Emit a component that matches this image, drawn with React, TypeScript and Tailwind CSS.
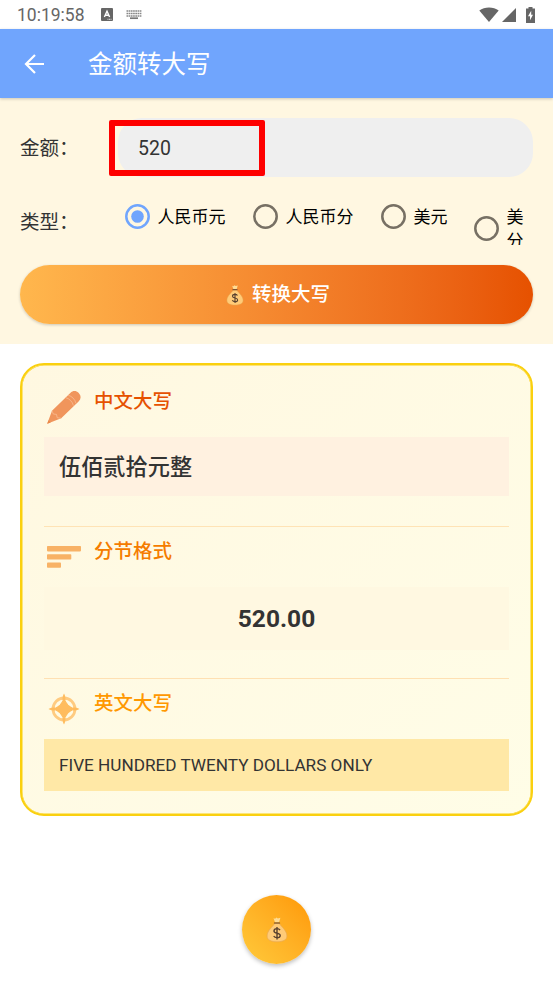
import { ReactNode, useState } from "react";

const types = [
  { label: "人民币元", className: "w-32" },
  { label: "人民币分", className: "w-32" },
  { label: "美元", className: "w-[93px]" },
  { label: "美分", className: "w-[52px]" },
];

function MoneyBag({ className }: { className: string }) {
  return (
    <svg viewBox="0 0 24 28" className={className}>
      <path d="M8.2 1.6 10 2.3 11.3.9 13 2 15.7 1.2 14.3 6H9.8z" fill="#ffdc94" />
      <path
        d="M9.4 7.5h5.2c1.3 3 8.2 7.2 8.2 13.6 0 4.5-4.7 6.3-10.8 6.3S1.2 25.6 1.2 21.1c0-6.4 6.9-10.6 8.2-13.6z"
        fill="#ffcb78"
        stroke="#e8a750"
        strokeWidth=".7"
      />
      <path d="M9.2 6.900h5.600" stroke="#64432f" strokeWidth="1.3" strokeLinecap="round" />
      <path
        d="M15.300 14.700c-.7-1.100-1.800-1.600-3.300-1.600-2 0-3.300.9-3.300 2.400 0 3.500 6.800 1.500 6.800 5 0 1.500-1.500 2.400-3.500 2.400-1.600 0-2.900-.6-3.600-1.800M12 11.200v13.600"
        fill="none"
        stroke="#58402e"
        strokeWidth="1.5"
      />
    </svg>
  );
}

function PencilIcon() {
  return (
    <svg viewBox="0 0 36 36" className="size-9">
      <path
        d="M1.200 34.800 6 21.800 24.300 4c2.600-2.600 5.800-2.500 8.200-.2l.4.400c2.400 2.500 2.300 5.600-.3 8.200L15.200 29.300z"
        fill="#f0955c"
      />
      <path
        d="M6 21.800l1.300 3.200 3.200.4.700 3.300 4 .6M19.700 8.700c3.600.8 6.800 3.900 7.700 7.900M22.200 6.300c3.600.8 6.800 3.900 7.700 7.900"
        fill="none"
        stroke="#f9bd93"
        strokeWidth=".8"
      />
      <path d="M1.200 34.800l1.300-3.500 2.200 2.200z" fill="#e98848" />
    </svg>
  );
}

function BarsIcon() {
  return (
    <svg viewBox="0 0 36 36" className="size-9" fill="#f8b266">
      <rect x="1" y="7" width="34" height="5.400" rx=".8" />
      <rect x="1" y="15.200" width="24.300" height="5.400" rx=".8" />
      <rect x="1" y="23.400" width="14" height="5.400" rx=".8" />
    </svg>
  );
}

function CompassIcon() {
  return (
    <svg viewBox="0 0 36 36" className="size-9" fill="#ffbc5e">
      <circle cx="18" cy="18" r="11" fill="none" stroke="#ffcb80" strokeWidth="2.800" />
      <path d="M18 2.500c1.200 2 1.500 4 1.500 6.500h-3c0-2.500.3-4.500 1.500-6.500zM18 33.500c-1.200-2-1.500-4-1.500-6.500h3c0 2.500-.3 4.500-1.500 6.500zM2.500 18c2-1.200 4-1.500 6.500-1.500v3c-2.500 0-4.500-.3-6.500-1.500zM33.500 18c-2 1.200-4 1.500-6.500 1.500v-3c2.500 0 4.500.3 6.500 1.500z" />
      <path d="M18 8c1.300 2.700 2.300 4.300 3.800 6.200C23.700 15.700 25.300 16.700 28 18c-2.700 1.300-4.300 2.300-6.200 3.800C20.300 23.700 19.300 25.300 18 28c-1.300-2.700-2.300-4.300-3.800-6.200C12.300 20.300 10.700 19.300 8 18c2.700-1.300 4.300-2.300 6.200-3.800C15.700 12.300 16.700 10.700 18 8z" stroke="#ffbc5e" strokeWidth="1.200" />
    </svg>
  );
}

function SectionTitle({ icon, color, children }: { icon: ReactNode; color: string; children: ReactNode }) {
  return (
    <div className="flex h-9 gap-3 pl-0.5">
      {icon}
      <h2 className={`pt-px text-[19.500px] leading-6 font-medium ${color}`}>{children}</h2>
    </div>
  );
}

function StatusBar() {
  return (
    <div className="flex h-[29px] items-center bg-white pr-[18px] pl-[17px] text-[#666]">
      <span className="w-[84px] pt-0.5 text-[17.500px] leading-none">10:19:58</span>
      <svg viewBox="0 0 12 13" className="h-[13px] w-3">
        <rect width="12" height="13" rx="1" fill="#666" />
        <path d="M3.400 9 6 3.200 8.600 9M4.300 7.200h3.400" fill="none" stroke="#fff" strokeWidth="1.400" />
        <path d="M6.500 11.300h4" stroke="#fff" strokeWidth=".8" strokeDasharray="1 .5" />
      </svg>
      <svg viewBox="0 0 16 10" className="ml-[13px] h-2.5 w-4">
        <path d="M.5 1h15M.5 3.500h15M.5 6h15" stroke="#888" strokeWidth="1.700" strokeDasharray="1.700 .5" />
        <path d="M4 8.200h8" stroke="#777" strokeWidth="1.700" />
      </svg>
      <div className="ml-auto flex items-center">
        <svg viewBox="0 0 20 15" className="h-[15px] w-5">
          <path d="M.3 3.500C5.500-.6 14.500-.6 19.700 3.500L10 15z" fill="#666" />
        </svg>
        <svg viewBox="0 0 14 14" className="ml-[3px] size-3.5">
          <path d="M14 0v14H0z" fill="#666" />
        </svg>
        <svg viewBox="0 0 9 16" className="ml-2.5 h-4 w-[9px]">
          <path d="M2.500 0h4v1.500H9V16H0V1.500h2.500z" fill="#666" />
          <path d="M5.200 3.700 2 9.200h2v4l3-5.500H5.200z" fill="#fff" />
        </svg>
      </div>
    </div>
  );
}

export default function App() {
  const [amount, setAmount] = useState("520");
  const [type, setType] = useState("人民币元");

  return (
    <div className="h-[983px] w-[553px] overflow-hidden bg-white font-[Roboto,'Noto_Sans_CJK_SC',sans-serif] text-[#333]">
      <StatusBar />
      <header className="relative flex h-[69px] items-center bg-[#70a5fd] pl-6 text-white shadow-[0_1px_3px_rgba(0,0,0,0.2)]">
        <svg viewBox="0 0 22 20" className="h-5 w-[22px]" fill="none" stroke="currentColor" strokeWidth="2.200">
          <path d="M20 10H2.500M11 1 2 10l9 9" />
        </svg>
        <h1 className="ml-[42px] pt-[3px] text-[24.500px] leading-8 font-normal">金额转大写</h1>
      </header>

      <div className="h-[246px] bg-[#fff7e1] px-5 pt-5">
        <div className="flex h-[59px] items-center">
          <label htmlFor="amount" className="w-[98px] pt-0.5 text-[19.500px]">
            金额：
          </label>
          <div className="relative h-full flex-1">
            <input
              id="amount"
              value={amount}
              onChange={(e) => setAmount(e.target.value)}
              className="h-full w-full rounded-[24px] bg-[#efefef] px-5 pt-0.5 text-[19.500px] outline-none"
            />
            <div className="pointer-events-none absolute top-0.5 -left-[9px] h-14 w-[156px] rounded-xs border-6 border-[#fe0000]" />
          </div>
        </div>

        <div className="mt-5 flex h-12">
          <span className="w-[105px] pt-[11px] text-[19.500px] leading-[30px]">类型：</span>
          <div className="flex h-12 overflow-hidden text-[17px] leading-6 text-black">
            {types.map((t) => (
              <button
                key={t.label}
                onClick={() => setType(t.label)}
                className={`flex shrink-0 items-center gap-[7.500px] text-left ${t.className} ${
                  t.label === "美分" ? "h-[62px]" : "h-[38px]"
                }`}
              >
                <svg viewBox="0 0 25 25" className="size-[25px] shrink-0">
                  <circle
                    cx="12.500"
                    cy="12.500"
                    r="11.200"
                    fill="none"
                    stroke={type === t.label ? "#70a5fd" : "#777064"}
                    strokeWidth="2.500"
                  />
                  {type === t.label && <circle cx="12.500" cy="12.500" r="6.300" fill="#70a5fd" />}
                </svg>
                <span className="pt-px">{t.label}</span>
              </button>
            ))}
          </div>
        </div>

        <button className="mt-5 flex h-[59px] w-full items-center justify-center gap-2 rounded-full bg-linear-to-r from-[#ffb74d] to-[#e65100] pl-[3px] text-[19.500px] font-medium text-white shadow-[0_1px_3px_rgba(0,0,0,0.2)]">
          <MoneyBag className="h-[22px] w-[18px]" />
          <span className="pt-px">转换大写</span>
        </button>
      </div>

      <section className="mx-5 mt-[19px] h-[453px] rounded-[24px] border-2 border-[#fad00f] bg-linear-to-br from-[#fff8e1] to-[#fffde7] px-[22px] pt-6 shadow-[inset_0_0_0_0.500px_#fad00f]">
        <SectionTitle color="text-[#e65100]" icon={<PencilIcon />}>
          中文大写
        </SectionTitle>
        <div className="mt-3 flex h-[59px] items-center bg-[#fff1e0] pt-0.5 pl-[15px] text-[22.200px] font-medium">
          伍佰贰拾元整
        </div>
        <div className="mt-[30px] border-t border-[#ffe3b5] pt-3">
          <SectionTitle color="text-[#f57c00]" icon={<BarsIcon />}>
            分节格式
          </SectionTitle>
          <div className="mt-3 flex h-[63px] items-center justify-center bg-[#fff8e1] pt-0.5 text-[24.500px] font-bold">
            520.00
          </div>
        </div>
        <div className="mt-7 border-t border-[#ffe0b2] pt-3">
          <SectionTitle color="text-[#ff9800]" icon={<CompassIcon />}>
            英文大写
          </SectionTitle>
          <div className="mt-3 flex h-[52px] items-center bg-[#ffe8a6] pt-0.5 pl-[15px] text-[17.170px]">
            FIVE HUNDRED TWENTY DOLLARS ONLY
          </div>
        </div>
      </section>

      <button className="mx-auto mt-[79px] flex size-[69px] items-center justify-center rounded-full bg-linear-to-tr from-[#ffca3a] to-[#ff9800] shadow-[0_2px_4px_rgba(0,0,0,0.25)]">
        <MoneyBag className="h-[27px] w-[22px]" />
      </button>
    </div>
  );
}
